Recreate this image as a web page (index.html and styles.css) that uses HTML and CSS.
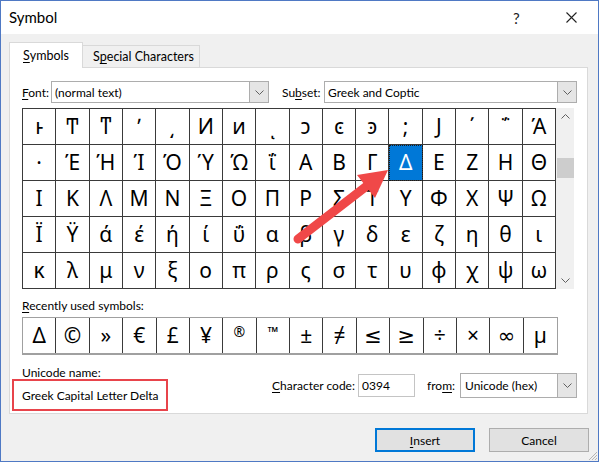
FILE: index.html
```html
<!DOCTYPE html>
<html>
<head>
<meta charset="utf-8">
<title>Symbol</title>
<link rel="stylesheet" href="styles.css">
</head>
<body>
<div class="window">
  <div class="titlebar">
    <span class="title">Symbol</span>
    <span class="tb-help">?</span>
    <span class="tb-close"><svg width="11" height="11" viewBox="0 0 11 11"><path d="M0.5 0.5 L10.5 10.5 M10.5 0.5 L0.5 10.5" stroke="#222" stroke-width="1.1" fill="none"/></svg></span>
  </div>
  <div class="body">
    <div class="tabs">
      <div class="tab active"><u>S</u>ymbols</div>
      <div class="tab">S<u>p</u>ecial Characters</div>
    </div>
    <div class="panel">
      <div class="font-row">
        <span class="lbl font-lbl"><u>F</u>ont:</span>
        <div class="combo font-combo"><span class="combo-text">(normal text)</span><span class="combo-btn"><svg width="9" height="5" viewBox="0 0 9 5"><path d="M0.5 0.5 L4.5 4.5 L8.5 0.5" stroke="#606060" fill="none"/></svg></span></div>
        <span class="lbl subset-lbl">Su<u>b</u>set:</span>
        <div class="combo subset-combo"><span class="combo-text">Greek and Coptic</span><span class="combo-btn"><svg width="9" height="5" viewBox="0 0 9 5"><path d="M0.5 0.5 L4.5 4.5 L8.5 0.5" stroke="#606060" fill="none"/></svg></span></div>
      </div>
      <div class="grid-wrap">
        <div class="grid">
          <div class="cell">ͱ</div><div class="cell">Ͳ</div><div class="cell">ͳ</div><div class="cell">ʹ</div><div class="cell">͵</div><div class="cell">Ͷ</div><div class="cell">ͷ</div><div class="cell">ͺ</div><div class="cell">ͻ</div><div class="cell">ͼ</div><div class="cell">ͽ</div><div class="cell">;</div><div class="cell">Ϳ</div><div class="cell">΄</div><div class="cell">΅</div><div class="cell">Ά</div>
          <div class="cell">·</div><div class="cell">Έ</div><div class="cell">Ή</div><div class="cell">Ί</div><div class="cell">Ό</div><div class="cell">Ύ</div><div class="cell">Ώ</div><div class="cell">ΐ</div><div class="cell">Α</div><div class="cell">Β</div><div class="cell">Γ</div><div class="cell sel">Δ</div><div class="cell">Ε</div><div class="cell">Ζ</div><div class="cell">Η</div><div class="cell">Θ</div>
          <div class="cell">Ι</div><div class="cell">Κ</div><div class="cell">Λ</div><div class="cell">Μ</div><div class="cell">Ν</div><div class="cell">Ξ</div><div class="cell">Ο</div><div class="cell">Π</div><div class="cell">Ρ</div><div class="cell">Σ</div><div class="cell">Τ</div><div class="cell">Υ</div><div class="cell">Φ</div><div class="cell">Χ</div><div class="cell">Ψ</div><div class="cell">Ω</div>
          <div class="cell">Ϊ</div><div class="cell">Ϋ</div><div class="cell">ά</div><div class="cell">έ</div><div class="cell">ή</div><div class="cell">ί</div><div class="cell">ΰ</div><div class="cell">α</div><div class="cell">β</div><div class="cell">γ</div><div class="cell">δ</div><div class="cell">ε</div><div class="cell">ζ</div><div class="cell">η</div><div class="cell">θ</div><div class="cell">ι</div>
          <div class="cell">κ</div><div class="cell">λ</div><div class="cell">μ</div><div class="cell">ν</div><div class="cell">ξ</div><div class="cell">ο</div><div class="cell">π</div><div class="cell">ρ</div><div class="cell">ς</div><div class="cell">σ</div><div class="cell">τ</div><div class="cell">υ</div><div class="cell">φ</div><div class="cell">χ</div><div class="cell">ψ</div><div class="cell">ω</div>
        </div>
        <div class="scrollbar">
          <span class="sb-arrow"><svg width="9" height="5" viewBox="0 0 9 5"><path d="M0.5 4.5 L4.5 0.5 L8.5 4.5" stroke="#606060" fill="none"/></svg></span>
          <span class="sb-gap"></span>
          <span class="sb-thumb"></span>
          <span class="sb-track"></span>
          <span class="sb-arrow"><svg width="9" height="5" viewBox="0 0 9 5"><path d="M0.5 0.5 L4.5 4.5 L8.5 0.5" stroke="#606060" fill="none"/></svg></span>
        </div>
      </div>
      <div class="lbl recent-lbl"><u>R</u>ecently used symbols:</div>
      <div class="recent">
        <div class="rcell">Δ</div><div class="rcell">©</div><div class="rcell">»</div><div class="rcell">€</div><div class="rcell">£</div><div class="rcell">¥</div><div class="rcell sup">®</div><div class="rcell sup tm">™</div><div class="rcell">±</div><div class="rcell">≠</div><div class="rcell">≤</div><div class="rcell">≥</div><div class="rcell">÷</div><div class="rcell">×</div><div class="rcell">∞</div><div class="rcell">µ</div>
      </div>
      <div class="bottom-row">
        <div class="uname">
          <div class="lbl uname-lbl">Unicode name:</div>
          <div class="uname-box">Greek Capital Letter Delta</div>
        </div>
        <div class="code-row">
          <span class="lbl code-lbl"><u>C</u>haracter code:</span>
          <div class="input">0394</div>
          <span class="lbl from-lbl">fro<u>m</u>:</span>
          <div class="combo from-combo"><span class="combo-text">Unicode (hex)</span><span class="combo-btn"><svg width="9" height="5" viewBox="0 0 9 5"><path d="M0.5 0.5 L4.5 4.5 L8.5 0.5" stroke="#606060" fill="none"/></svg></span></div>
        </div>
      </div>
    </div>
    <div class="buttons">
      <div class="btn default"><u>I</u>nsert</div>
      <div class="btn">Cancel</div>
    </div>
  </div>
  <svg class="arrow" width="599" height="462" viewBox="0 0 599 462">
    <line x1="298" y1="239" x2="368" y2="185" stroke="#f04848" stroke-width="9" stroke-linecap="round"/>
    <polygon points="388,170 375,198 357,175" fill="#f04848"/>
  </svg>
  <svg class="grip" width="10" height="10" viewBox="0 0 10 10">
    <path d="M9 1 L1 9 M9 4 L4 9 M9 7 L7 9" stroke="#b5b5b5" stroke-width="1" fill="none"/>
  </svg>
</div>
</body>
</html>
```

FILE: styles.css
```css
* { box-sizing: border-box; }
html, body { margin: 0; padding: 0; background: #fff; }
body {
  font-family: Lato, "Noto Sans", "DejaVu Sans", sans-serif;
  font-size: 12px;
  color: #000;
}
u { text-decoration: underline; text-underline-offset: 2px; }

.window {
  position: relative;
  width: 599px;
  height: 462px;
  border: 1px solid #4f79c4;
  background: #f0f0f0;
  display: flex;
  flex-direction: column;
  overflow: hidden;
}

.titlebar {
  height: 33px;
  background: #fff;
  display: flex;
  align-items: center;
  padding-left: 8px;
}
.title { font-size: 15px; flex: 1; padding-bottom: 1px; }
.tb-help { font-size: 15px; width: 12px; margin-right: 41px; color: #222; }
.tb-close { width: 11px; margin-right: 21px; display: flex; }

.body { flex: 1; display: flex; flex-direction: column; }

.tabs {
  display: flex;
  align-items: flex-end;
  margin-top: 8px;
  margin-left: 8px;
  height: 25px;
}
.tab {
  height: 22px;
  padding: 0 0 0 10px;
  border: 1px solid #d9d9d9;
  border-bottom: none;
  border-left: none;
  background: #f0f0f0;
  display: flex;
  align-items: center;
  font-size: 12.5px;
  width: 117px;
  white-space: nowrap;
}
.tab.active {
  position: relative;
  z-index: 1;
  height: 26px;
  margin-bottom: -1px;
  background: #fff;
  border-left: 1px solid #d9d9d9;
  width: 74px;
  padding-left: 13px;
  padding-bottom: 1px;
}

.panel {
  margin-left: 8px;
  width: 579px;
  height: 347px;
  background: #fff;
  border: 1px solid #d9d9d9;
  display: flex;
  flex-direction: column;
}

.lbl { white-space: nowrap; }

.font-row {
  display: flex;
  align-items: center;
  margin-top: 13px;
  height: 22px;
  padding-left: 12px;
}
.font-lbl { width: 29px; }
.subset-lbl { width: 42px; margin-left: 13px; }
.combo {
  height: 22px;
  border: 1px solid #adadad;
  background: #fff;
  display: flex;
  align-items: stretch;
  white-space: nowrap;
}
.font-combo { width: 218px; }
.subset-combo { width: 253px; }
.combo-text { flex: 1; padding-left: 3px; display: flex; align-items: center; }
.combo-btn {
  width: 19px;
  background: #e5e5e5;
  border-left: 1px solid #adadad;
  display: flex;
  align-items: center;
  justify-content: center;
}

.grid-wrap {
  display: flex;
  margin-top: 5px;
  margin-left: 12px;
  height: 181px;
}
.grid {
  width: 534px;
  height: 181px;
  display: grid;
  grid-template-columns: repeat(16, 1fr);
  grid-template-rows: repeat(5, 1fr);
  border-top: 1px solid #3a3a3a;
  border-left: 1px solid #3a3a3a;
  font-family: "Noto Sans", "DejaVu Sans", sans-serif;
}
.cell {
  border-right: 1px solid #3a3a3a;
  border-bottom: 1px solid #3a3a3a;
  display: flex;
  align-items: center;
  justify-content: center;
  font-size: 21px;
  line-height: 1;
  padding-bottom: 1px;
}
.cell.sel {
  background: #0078d7;
  color: #fff;
  outline: 1px dotted #1a1a1a;
  outline-offset: -1px;
}
.scrollbar {
  width: 18px;
  height: 181px;
  background: #f0f0f0;
  display: flex;
  flex-direction: column;
}
.sb-arrow { height: 17px; display: flex; align-items: center; justify-content: center; }
.sb-gap { height: 33px; }
.sb-thumb { height: 20px; background: #cdcdcd; margin-left: 1px; }
.sb-track { flex: 1; }

.recent-lbl { margin-top: 9px; padding-left: 12px; line-height: 16px; }
.recent {
  margin-top: 3px;
  margin-left: 12px;
  width: 536px;
  height: 38px;
  display: grid;
  grid-template-columns: repeat(16, 1fr);
  border: 1px solid #a0a0a0;
  border-bottom: 2px solid #a0a0a0;
  font-family: "Noto Sans", "DejaVu Sans", sans-serif;
}
.rcell {
  border-right: 1px solid #3a3a3a;
  display: flex;
  align-items: center;
  justify-content: center;
  font-size: 21px;
  line-height: 1;
}
.rcell:last-child { border-right: none; }
.rcell.sup { align-items: flex-start; padding-top: 7px; font-size: 14px; }
.rcell.tm { font-weight: bold; }

.bottom-row { display: flex; align-items: flex-start; margin-top: 11px; }
.uname { display: flex; flex-direction: column; width: 262px; }
.uname-lbl { padding-left: 12px; line-height: 14px; }
.uname-box {
  margin-top: -1px;
  margin-left: 2px;
  width: 156px;
  height: 32px;
  border: 2px solid #e8444b;
  padding-left: 8px;
  display: flex;
  align-items: center;
  white-space: nowrap;
}
.code-row {
  display: flex;
  align-items: center;
  margin-top: 7px;
  height: 25px;
}
.code-lbl { width: 86px; }
.input {
  width: 57px;
  height: 23px;
  border: 1px solid #c4c4c4;
  padding-left: 3px;
  display: flex;
  align-items: center;
}
.from-lbl { width: 33px; margin-left: 12px; }
.from-combo { width: 117px; height: 25px; }
.from-combo .combo-text { padding-left: 4px; }

.buttons {
  display: flex;
  justify-content: flex-end;
  gap: 14px;
  margin-top: 14px;
  padding-right: 9px;
}
.btn {
  width: 100px;
  height: 24px;
  background: #e1e1e1;
  border: 1px solid #adadad;
  display: flex;
  align-items: center;
  justify-content: center;
}
.btn.default { border: 2px solid #0078d7; }

.arrow {
  position: absolute;
  left: -1px;
  top: -1px;
  pointer-events: none;
}
.grip {
  position: absolute;
  right: 0;
  bottom: 0;
}
```
